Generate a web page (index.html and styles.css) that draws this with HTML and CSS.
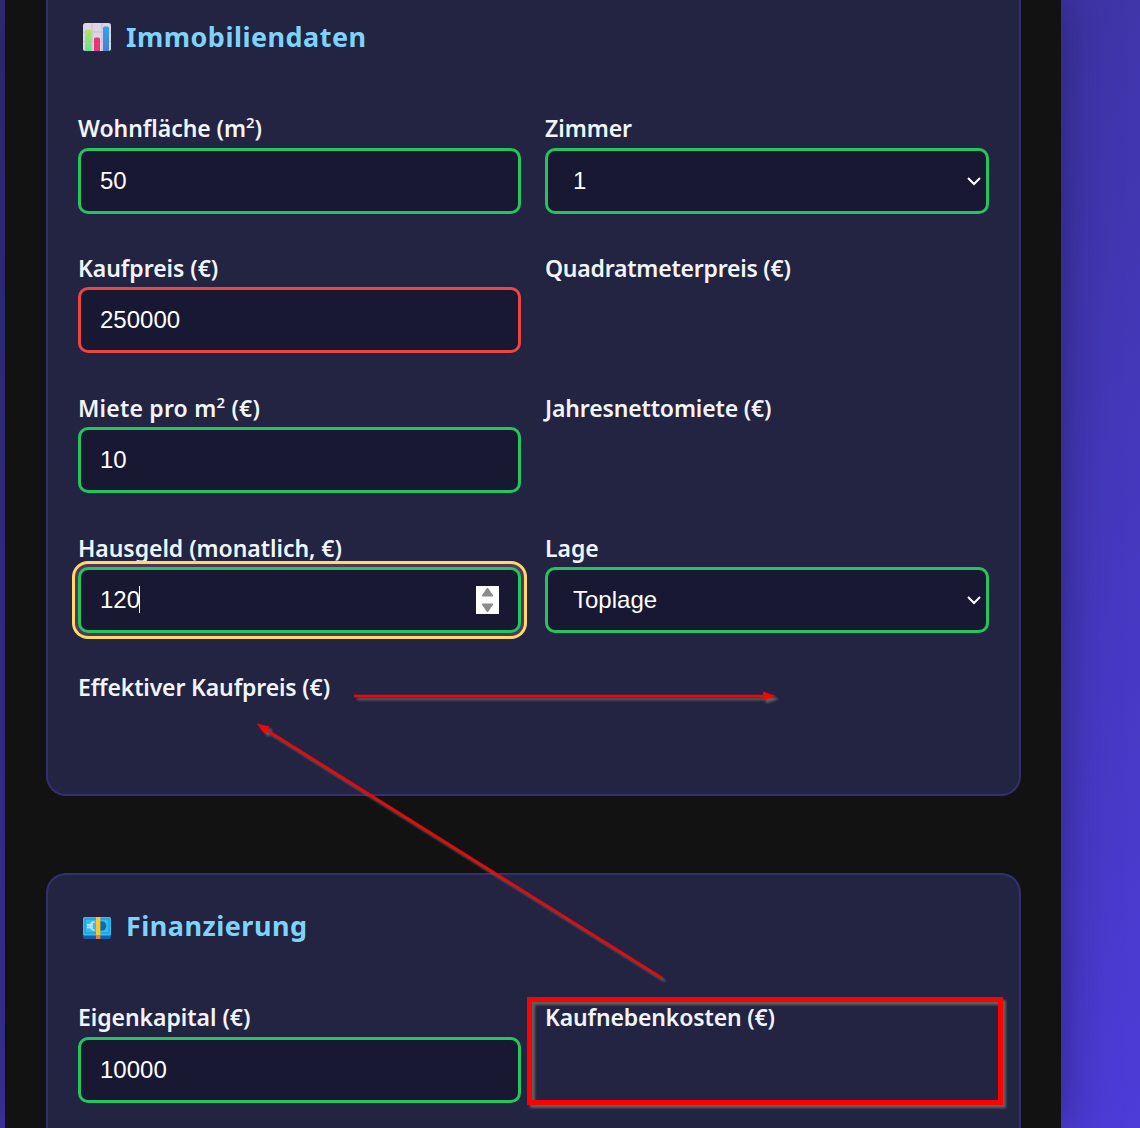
FILE: index.html
```html
<!DOCTYPE html>
<html lang="de">
<head>
<meta charset="utf-8">
<title>Immobilienrechner</title>
<link rel="stylesheet" href="styles.css">
</head>
<body>
<main class="panel">
  <section class="card card-property">
    <h2 class="card-title">
      <svg class="icon" width="28" height="28" viewBox="0 0 28 28">
        <defs>
          <linearGradient id="bar-green" x2="0" y2="1"><stop stop-color="#b5e45c"/><stop offset="1" stop-color="#5de391"/></linearGradient>
          <linearGradient id="bar-blue" x2="0" y2="1"><stop stop-color="#2ea5f1"/><stop offset="1" stop-color="#467fd2"/></linearGradient>
        </defs>
        <rect width="28" height="28" rx="2.500" fill="#dcd5e4"/>
        <path d="M0 9h28M0 18.500h28M9 0v28M19 0v28" stroke="#c8bfd2"/>
        <path d="M2 28V8q0-1.500 1.500-1.500h3.500Q8.500 6.500 8.500 8v20z" fill="url(#bar-green)"/>
        <path d="M11 28V16q0-1.500 1.500-1.500h3q1.500 0 1.500 1.500v12z" fill="#e6357d"/>
        <path d="M20 28V5q0-1.500 1.500-1.500h3Q26 3.500 26 5v23z" fill="url(#bar-blue)"/>
      </svg>
      <span class="title-text">Immobiliendaten</span>
    </h2>
    <div class="fields">
      <div class="field"><label class="label">Wohnfläche (m<sup>2</sup>)</label><input class="control" value="50"></div>
      <div class="field"><label class="label">Zimmer</label>
        <div class="select"><select class="control"><option>1</option></select><svg class="chevron" width="14" height="9" viewBox="0 0 14 9"><path d="M1 1l6 6 6-6"/></svg></div></div>
      <div class="field"><label class="label">Kaufpreis (€)</label><input class="control invalid" value="250000"></div>
      <div class="field"><label class="label tighter">Quadratmeterpreis (€)</label></div>
      <div class="field"><label class="label wider">Miete pro m<sup>2</sup> (€)</label><input class="control" value="10"></div>
      <div class="field"><label class="label tight">Jahresnettomiete (€)</label></div>
      <div class="field"><label class="label">Hausgeld (monatlich, €)</label>
        <div class="number"><input class="control focused" value="120"><i class="caret"></i>
          <svg class="spinner" width="23" height="28" viewBox="0 0 23 28"><rect width="23" height="28" fill="#fff"/><path d="M11.500 2l5.500 8H6zM6 18h11l-5.500 8z" fill="#8b8b8b" stroke="#8b8b8b" stroke-linejoin="round"/></svg></div></div>
      <div class="field"><label class="label">Lage</label>
        <div class="select"><select class="control"><option>Toplage</option></select><svg class="chevron" width="14" height="9" viewBox="0 0 14 9"><path d="M1 1l6 6 6-6"/></svg></div></div>
      <div class="field"><label class="label tight">Effektiver Kaufpreis (€)</label></div>
    </div>
  </section>
  <section class="card card-finance">
    <h2 class="card-title">
      <svg class="icon" width="28" height="28" viewBox="0 0 28 28">
        <rect y="8" width="28" height="19" rx="2" fill="#175eaa"/>
        <rect y="5" width="28" height="18.500" rx="1.500" fill="#30bff0"/>
        <rect x="2" y="7" width="24" height="14" fill="none" stroke="#2390cd"/>
        <circle cx="18.500" cy="14" r="4.800" fill="#176a9e"/>
        <path d="M11.500 10a4 4 0 1 0 0 8M4 12.800h6M4 15.300h6" fill="none" stroke="#c4dfea" stroke-width="1.800"/>
        <path d="M13 5h4.300v18H13z" fill="#ffc52b"/><path d="M13 23h4.300v4H13z" fill="#d98745"/>
      </svg>
      <span class="title-text">Finanzierung</span>
    </h2>
    <div class="fields">
      <div class="field"><label class="label">Eigenkapital (€)</label><input class="control" value="10000"></div>
      <div class="field"><label class="label tight">Kaufnebenkosten (€)</label></div>
    </div>
  </section>
</main>
<svg class="annotations" width="1140" height="1128" viewBox="0 0 1140 1128">
  <defs><filter id="mark-shadow" filterUnits="userSpaceOnUse" x="200" y="650" width="900" height="478" color-interpolation-filters="sRGB"><feDropShadow dx="3" dy="3" stdDeviation="1.200" flood-color="#666" flood-opacity=".9"/></filter></defs>
  <g filter="url(#mark-shadow)">
    <path d="M354 696H768" stroke="#f00" stroke-width="2.500"/>
    <path d="M763 691.500l13 4.500-13 4.500z" fill="#f00"/>
    <path d="M662 978L265 729" stroke="#f00" stroke-width="2.500"/>
    <path d="M256.500 723.500l13 3-4.500 7.500z" fill="#f00"/>
    <path d="M529.500 999.500h471v103h-471z" fill="none" stroke="#f00" stroke-width="5"/>
  </g>
</svg>
</body>
</html>
```
FILE: styles.css
```css
* { box-sizing: border-box; }
html, body { height: 100%; }
body {
  margin: 0;
  padding: 0 79px 0 5px;
  overflow: hidden;
  background: linear-gradient(135deg, #332e7a, #4d3cd8);
  font-family: "Noto Sans", sans-serif;
}
.panel {
  height: 1128px;
  padding: 0 40px 0 41px;
  background: #121212;
  box-shadow: 0 0 44px rgba(20, 16, 50, .5);
}
.card {
  border: 2px solid #333070;
  background: #232342;
  padding: 0 30px;
}
.card-property { height: 796px; border-top: 0; border-radius: 0 0 20px 20px; padding-top: 17px; }
.card-finance { height: 255px; margin-top: 77px; border-bottom: 0; border-radius: 20px 20px 0 0; padding-top: 31px; }
.card-title {
  display: flex;
  align-items: center;
  gap: 15px;
  height: 40px;
  margin: 0 0 53px;
  padding-left: 5px;
  color: #7dd3fc;
  font-size: 27px;
  line-height: 40px;
  font-weight: 700;
}
.icon { flex: none; }
.title-text { white-space: nowrap; letter-spacing: .46px; }
.fields {
  display: grid;
  grid-template-columns: 443px 1fr;
  gap: 36.850px 24px;
}
.field { height: 103px; }
.label {
  display: block;
  height: 37.600px;
  padding-top: 2px;
  color: #f1f5f9;
  font-size: 23px;
  font-weight: 600;
  line-height: 32px;
  letter-spacing: -.05px;
  white-space: nowrap;
}
.tight { letter-spacing: -.15px; }
.tighter { letter-spacing: -.23px; }
.wider { letter-spacing: .2px; }
.label sup { font-size: 15px; line-height: 0; vertical-align: 9px; }
.control {
  display: block;
  width: 100%;
  height: 66px;
  margin: 0;
  padding: 0 19px;
  border: 3px solid #22c55e;
  border-radius: 10px;
  outline: 0;
  appearance: none;
  background: #181832;
  color: #fff;
  font: 24px "Liberation Sans", Arial, sans-serif;
}
.invalid { border-color: #ef4444; }
.select, .number { position: relative; }
.select .control { padding-left: 25px; padding-bottom: 1px; }
.chevron { position: absolute; right: 8px; top: 29px; fill: none; stroke: #fff; stroke-width: 2; }
.focused { box-shadow: 0 0 0 3px #533759, 0 0 0 6px #ffd86b; }
.caret { position: absolute; left: 61px; top: 19px; width: 1px; height: 27px; background: #fff; }
.spinner { position: absolute; right: 22px; top: 19px; }
.annotations { position: absolute; left: 0; top: 0; pointer-events: none; }
```
